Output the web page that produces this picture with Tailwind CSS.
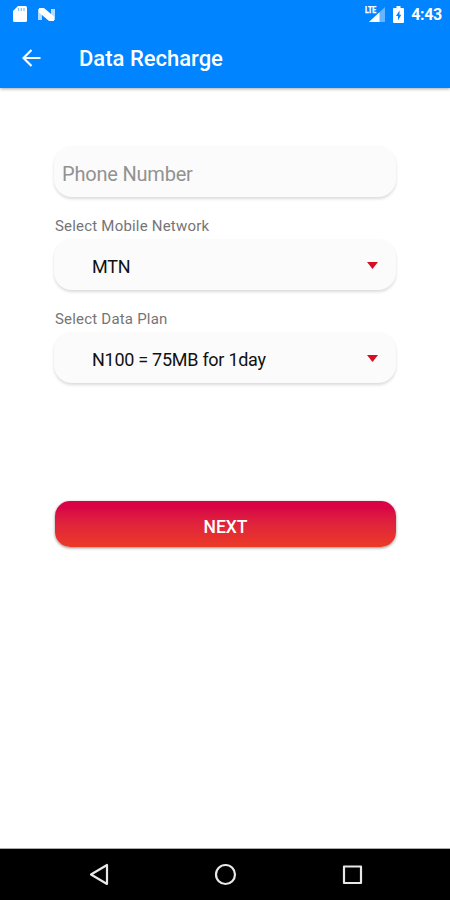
<!DOCTYPE html>
<html lang="en">
<head>
  <meta charset="UTF-8">
  <meta name="viewport" content="width=device-width, initial-scale=1">
  <title>Data Recharge</title>
  <script src="https://cdn.jsdelivr.net/npm/@tailwindcss/browser@4"></script>
</head>
<body class="bg-white font-['Roboto',sans-serif]">
  <div class="flex h-[900px] w-[450px] flex-col overflow-hidden">
    <header class="relative h-[88px] shrink-0 bg-[#0084ff] text-white shadow-[0_1px_3px_rgba(0,0,0,0.35)]">
      <!-- status bar -->
      <div class="flex h-7 items-center justify-between pl-[13px] pr-2">
        <div class="flex items-center gap-[11px]">
          <svg class="h-4 w-[14px]" viewBox="0 0 14 16" fill="#fff">
            <path d="M5 0h7.500Q14 0 14 1.500v13q0 1.500-1.500 1.500h-11Q0 16 0 14.500V5z"/>
            <path d="M5.500 2v3M8.300 2v3M11 2v3" stroke="#0084ff" stroke-width="1.200" stroke-opacity=".5"/>
          </svg>
          <svg class="h-[13px] w-[17px]" viewBox="0 0 17 13">
            <path d="M0 1h4v11H0zM13 1h4v11h-4z" fill="#fff" fill-opacity=".7"/>
            <path d="M1 0h5l10 8.500V13h-5L1 4.500z" fill="#fff"/>
          </svg>
        </div>
        <div class="flex items-center">
          <svg class="h-4 w-5" viewBox="0 0 20 16">
            <path d="M20 1v15H4z" fill="#fff" fill-opacity=".4"/>
            <path d="M14.500 6.200V16H4z" fill="#fff"/>
            <path d="M0 0h11.500v7H0z" fill="#0084ff"/>
            <text x="0" y="6.500" fill="#fff" stroke="#fff" stroke-width=".4" font-size="8.500" font-weight="700" textLength="11" lengthAdjust="spacingAndGlyphs">LTE</text>
          </svg>
          <svg class="ml-[8px] h-[17px] w-[11px]" viewBox="0 0 11 17">
            <path d="M3.500 0h4v2H10q1 0 1 1v13q0 1-1 1H1q-1 0-1-1V3q0-1 1-1h2.500z" fill="#fff"/>
            <path d="M6.500 4.500 3 10h2v4.500l3.300-5.800H6.500z" fill="#0084ff"/>
          </svg>
          <span class="ml-[7px] pt-px text-[16px] leading-[27px] font-bold tracking-[-0.3px]">4:43</span>
        </div>
      </div>
      <!-- toolbar -->
      <div class="flex h-[60px] items-center pl-[22px]">
        <svg class="h-[18px] w-[19px]" viewBox="0 0 19 18" fill="none" stroke="#fff" stroke-width="2.200">
          <path d="M18.500 9H1.500M9.500 1 1.500 9l8 8"/>
        </svg>
        <h1 class="ml-[38px] pt-0.5 text-[22px] leading-[58px] font-medium">Data Recharge</h1>
      </div>
    </header>

    <main class="flex-1 pt-[58px] pr-[54px] pl-[54px]">
      <input type="tel" placeholder="Phone Number" class="block h-[51px] w-full rounded-[18px] bg-[#fbfbfb] px-2 pt-1 text-[20px] tracking-[-0.2px] shadow-[0_2px_3px_rgba(0,0,0,0.14)] placeholder:text-[#929292]">

      <label class="mt-[19px] block h-[23px] pl-px text-[15px] leading-5 tracking-[0.2px] text-[#757575]">Select Mobile Network</label>
      <div class="flex h-[51px] items-center justify-between rounded-[18px] bg-[#fbfbfb] pr-[18px] pl-[38px] shadow-[0_2px_3px_rgba(0,0,0,0.14)]">
        <span class="pt-1 text-[18px] leading-6 tracking-[-0.25px] text-[#111]">MTN</span>
        <svg class="mt-0.5 h-[7px] w-[11px]" viewBox="0 0 11 7"><path d="M0 0h11L5.500 7z" fill="#d50d25"/></svg>
      </div>

      <label class="mt-[19px] block h-[23px] pl-px text-[15px] leading-5 tracking-[0.2px] text-[#757575]">Select Data Plan</label>
      <div class="flex h-[51px] items-center justify-between rounded-[18px] bg-[#fbfbfb] pr-[18px] pl-[38px] shadow-[0_2px_3px_rgba(0,0,0,0.14)]">
        <span class="pt-1 text-[18px] leading-6 tracking-[-0.27px] text-[#111]">N100 = 75MB for 1day</span>
        <svg class="mt-0.5 h-[7px] w-[11px]" viewBox="0 0 11 7"><path d="M0 0h11L5.500 7z" fill="#d50d25"/></svg>
      </div>

      <button class="mt-[118px] ml-px block h-[46px] w-[341px] rounded-[15px] bg-linear-to-b from-[#d90345] from-15% to-[#eb3a25] pt-[5px] text-[17.500px] leading-5 font-medium text-white shadow-[0_1px_3px_rgba(0,0,0,0.45)]">NEXT</button>
    </main>

    <nav class="h-[52px] shrink-0 border-t border-[#aaa] bg-black">
      <svg class="h-[51px] w-[450px]" viewBox="0 849 450 51" fill="none" stroke="#e8e8e8" stroke-width="2.200" stroke-linejoin="round">
        <path d="M107 865v19l-16-9.500z"/>
        <circle cx="225.500" cy="874.500" r="9.500"/>
        <rect x="344" y="866.500" width="17" height="16.500"/>
      </svg>
    </nav>
  </div>
</body>
</html>
